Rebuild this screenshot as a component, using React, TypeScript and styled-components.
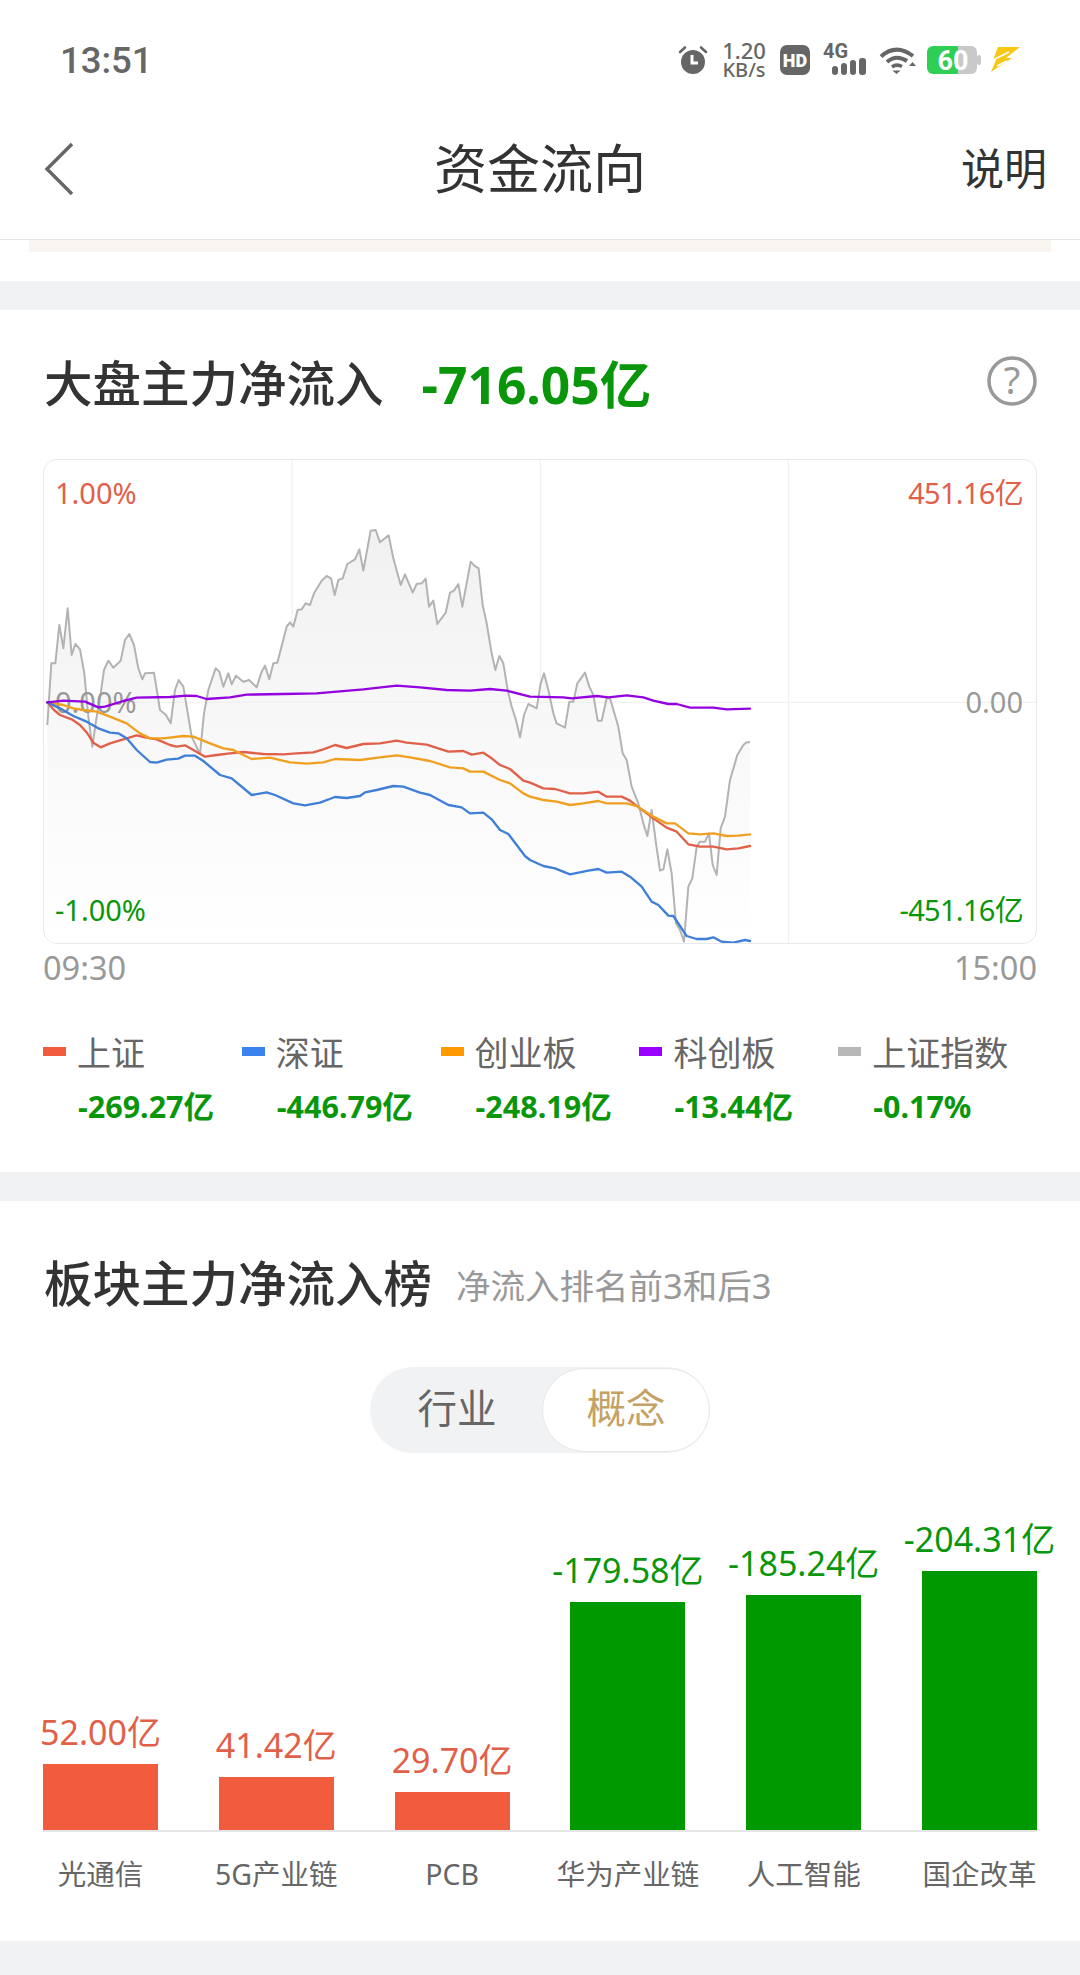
import React from 'react';
import styled, { createGlobalStyle } from 'styled-components';

const GlobalStyle = createGlobalStyle`
  html, body { margin: 0; padding: 0; background: #fff; }
  body { font-family: "Noto Sans", "Noto Sans CJK SC", sans-serif; }
  * { box-sizing: border-box; }
`;

const RED = '#e0604a';
const GREEN = '#0a960a';

const Page = styled.div`
  width: 1080px;
  height: 1975px;
  overflow: hidden;
  background: #fff;
  display: flex;
  flex-direction: column;
`;
const Header = styled.header`
  height: 240px;
  flex: none;
  border-bottom: 1px solid #e6e6e6;
`;
const StatusBar = styled.div`
  height: 120px;
  padding: 0 60px 0 60px;
  display: flex;
  align-items: center;
  justify-content: space-between;
`;
const Clock = styled.div`
  font-family: Roboto, sans-serif;
  font-size: 36.5px;
  font-weight: 500;
  color: #666;
`;
const StatusIcons = styled.div`
  display: flex;
  align-items: center;
`;
const StatusIcon = styled.svg<{ $ml: number }>`
  display: block;
  flex: none;
  overflow: visible;
  margin-left: ${(p) => p.$ml}px;
`;
const Speed = styled.div`
  width: 46px;
  margin-left: 13px;
  margin-right: -1px;
  display: flex;
  flex-direction: column;
  align-items: center;
  color: #666;
  font-weight: 500;
  line-height: 19px;
  font-size: 20px;
  white-space: nowrap;
`;
const SpeedValue = styled.span`
  font-size: 22px;
`;
const NavBar = styled.div`
  height: 100px;
  padding: 0 33px 2px;
  display: grid;
  grid-template-columns: 1fr auto 1fr;
  align-items: center;
`;
const BackIcon = styled.svg`
  display: block;
  margin-left: 11px;
`;
const NavTitle = styled.div`
  font-size: 53px;
  color: #333;
  line-height: 60px;
`;
const NavAction = styled.div`
  font-size: 43px;
  line-height: 50px;
  color: #333;
  text-align: right;
`;
const NoticeEdge = styled.div`
  height: 12px;
  margin: 0 29px;
  background: #f9f6f1;
  flex: none;
`;
const NoticeGap = styled.div`
  height: 29px;
  flex: none;
`;
const Divider = styled.div<{ $h: number }>`
  height: ${(p) => p.$h}px;
  background: #f1f2f4;
  flex: none;
`;
const Card = styled.section<{ $h: number }>`
  height: ${(p) => p.$h}px;
  padding: 0 43px;
  flex: none;
`;
const TitleRow = styled.div<{ $h: number; $lift: number }>`
  height: ${(p) => p.$h}px;
  padding-bottom: ${(p) => p.$lift}px;
  display: flex;
  align-items: center;
  padding-left: 1px;
`;
const Title = styled.h2`
  margin: 0;
  font-size: 48.5px;
  font-weight: 500;
  color: #333;
  white-space: nowrap;
`;
const TotalValue = styled.div`
  margin-left: 38px;
  font-size: 51.5px;
  font-weight: 700;
  color: #0a960a;
  white-space: nowrap;
`;
const HelpIcon = styled.svg`
  display: block;
  margin-left: auto;
  overflow: visible;
`;
const ChartBox = styled.div`
  position: relative;
  height: 485px;
  border: 1px solid #e9e9e9;
  border-radius: 14px;
  overflow: hidden;
`;
const ChartSvg = styled.svg`
  position: absolute;
  left: -1px;
  top: -1px;
  width: 994px;
  height: 485px;
`;
const AxisLabel = styled.div<{ $color: string; $side: 'left' | 'right'; $y: number; $tight?: boolean }>`
  position: absolute;
  ${(p) => p.$side}: ${(p) => (p.$side === 'left' ? 11 : 13)}px;
  top: ${(p) => p.$y - 22}px;
  font-size: 29px;
  line-height: 42px;
  letter-spacing: ${(p) => (p.$tight ? '-0.7px' : '0')};
  color: ${(p) => p.$color};
  white-space: nowrap;
`;
const TimeRow = styled.div`
  height: 50px;
  padding-bottom: 4px;
  display: flex;
  align-items: center;
  justify-content: space-between;
  font-size: 32.5px;
  color: #999;
`;
const Legend = styled.div`
  margin-top: 37px;
  display: grid;
  grid-template-columns: repeat(5, 1fr);
`;
const LegendItem = styled.div`
  display: flex;
  flex-direction: column;
  gap: 15px;
`;
const LegendName = styled.div`
  display: flex;
  align-items: center;
  gap: 11px;
  height: 40px;
  font-size: 34px;
  color: #666;
  white-space: nowrap;
`;
const Swatch = styled.span<{ $color: string }>`
  width: 23px;
  height: 9px;
  background: ${(p) => p.$color};
  flex: none;
`;
const LegendValue = styled.div`
  height: 40px;
  line-height: 40px;
  padding-left: 35px;
  font-size: 30.5px;
  font-weight: 700;
  color: #0a960a;
  white-space: nowrap;
`;
const SubTitle = styled.span`
  margin-left: 24px;
  margin-top: 6px;
  font-size: 34.5px;
  color: #999;
  white-space: nowrap;
`;
const Toggle = styled.div`
  margin: 4px auto 0;
  width: 340px;
  height: 86px;
  border-radius: 43px;
  background: #f1f2f4;
  display: flex;
  justify-content: flex-end;
  align-items: center;
`;
const ToggleOption = styled.div<{ $active?: boolean }>`
  flex: 1;
  height: ${(p) => (p.$active ? '84px' : '86px')};
  display: flex;
  align-items: center;
  justify-content: center;
  font-size: 39.5px;
  border-radius: 43px;
  color: ${(p) => (p.$active ? '#c4a265' : '#666')};
  background: ${(p) => (p.$active ? '#fff' : 'transparent')};
  border: ${(p) => (p.$active ? '1px solid #e8e8e8' : 'none')};
  padding-left: ${(p) => (p.$active ? '0' : '2px')};
  padding-bottom: 8px;
  ${(p) => (p.$active ? 'flex: none; width: 168px;' : '')}
`;
const BarPlot = styled.div`
  height: 379px;
  display: grid;
  grid-template-columns: repeat(6, 115px);
  justify-content: space-between;
  align-items: end;
  border-bottom: 2px solid #e6e6e6;
`;
const BarColumn = styled.div`
  display: flex;
  flex-direction: column;
  align-items: center;
  gap: 10px;
`;
const BarValue = styled.div<{ $color: string }>`
  font-size: 34px;
  line-height: 44px;
  color: ${(p) => p.$color};
  white-space: nowrap;
`;
const Bar = styled.div<{ $color: string; $h: number }>`
  width: 115px;
  height: ${(p) => p.$h}px;
  background: ${(p) => p.$color};
`;
const BarLabels = styled.div`
  margin-top: 22px;
  display: grid;
  grid-template-columns: repeat(6, 115px);
  justify-content: space-between;
`;
const BarLabel = styled.div`
  font-size: 28.5px;
  line-height: 40px;
  color: #666;
  text-align: center;
  white-space: nowrap;
  display: flex;
  justify-content: center;
`;

type P = [number, number];

const gray: P[] = [[52,825],[64,640],[76,640],[88,525],[100,595],[113,475],[125,615],[136,582],[150,598],[163,670],[175,800],[187,890],[200,800],[212,730],[222,660],[235,632],[250,653],[272,632],[285,570],[298,552],[312,585],[325,655],[337,688],[345,670],[372,668],[390,780],[408,795],[422,820],[435,720],[446,690],[460,710],[475,800],[485,860],[510,912],[522,790],[535,720],[557,655],[568,665],[580,710],[595,670],[605,703],[618,677],[640,695],[657,690],[680,712],[695,665],[705,647],[718,688],[730,640],[742,638],[770,530],[780,517],[790,530],[803,480],[815,478],[827,460],[840,465],[852,430],[875,392],[890,378],[903,385],[914,435],[925,390],[938,385],[952,342],[975,328],[988,298],[1000,362],[1022,242],[1037,240],[1050,277],[1076,256],[1090,325],[1112,405],[1125,373],[1148,428],[1160,402],[1175,400],[1187,386],[1197,470],[1210,452],[1222,522],[1247,488],[1260,428],[1272,422],[1285,402],[1297,470],[1322,335],[1333,347],[1346,355],[1358,465],[1370,520],[1385,610],[1396,660],[1408,618],[1420,640],[1433,720],[1445,770],[1458,810],[1470,862],[1482,795],[1495,762],[1520,775],[1532,700],[1542,670],[1555,720],[1570,790],[1580,820],[1605,833],[1618,755],[1630,755],[1642,700],[1665,668],[1678,710],[1690,735],[1703,812],[1715,812],[1730,745],[1740,745],[1765,830],[1778,910],[1790,930],[1805,1010],[1825,1060],[1840,1120],[1852,1158],[1865,1080],[1878,1180],[1890,1262],[1900,1258],[1912,1198],[1925,1270],[1938,1420],[1950,1440],[1962,1475],[1975,1310],[1987,1285],[2000,1190],[2010,1175],[2025,1175],[2037,1150],[2048,1245],[2060,1275],[2072,1135],[2085,1100],[2100,990],[2122,915],[2140,885],[2150,877],[2160,877]];

const red: P[] = [[52,757],[70,778],[90,795],[125,808],[150,825],[172,850],[190,878],[212,892],[240,880],[280,868],[320,856],[345,862],[380,868],[420,885],[440,890],[465,886],[490,900],[525,920],[560,915],[600,910],[640,906],[700,912],[760,913],[800,910],[850,907],[880,898],[915,885],[950,894],[1000,882],[1050,880],[1100,872],[1130,878],[1190,884],[1255,905],[1300,903],[1325,914],[1360,908],[1385,925],[1410,945],[1440,957],[1480,992],[1500,998],[1540,1015],[1575,1017],[1620,1030],[1660,1030],[1705,1025],[1730,1040],[1775,1040],[1800,1052],[1830,1075],[1870,1105],[1910,1133],[1940,1145],[1975,1183],[2010,1190],[2050,1190],[2090,1198],[2125,1195],[2160,1188]];

const orange: P[] = [[52,757],[100,765],[130,775],[160,780],[200,785],[240,800],[290,820],[330,850],[360,865],[400,865],[460,858],[490,860],[540,880],[580,895],[610,900],[640,915],[665,927],[720,923],[780,937],[830,941],[880,937],[915,927],[990,930],[1050,922],[1100,916],[1140,922],[1200,933],[1260,952],[1300,955],[1320,965],[1360,965],[1410,990],[1440,1000],[1480,1030],[1500,1040],[1540,1050],[1580,1055],[1620,1065],[1660,1060],[1705,1053],[1730,1060],[1790,1060],[1820,1068],[1870,1100],[1910,1120],[1935,1120],[1975,1150],[2010,1153],[2050,1150],[2090,1158],[2125,1157],[2160,1153]];

const blue: P[] = [[52,757],[90,775],[130,798],[170,815],[205,835],[240,848],[265,850],[290,865],[320,900],[360,936],[380,938],[410,929],[445,926],[465,917],[495,917],[520,933],[570,975],[605,985],[665,1035],[710,1027],[735,1035],[790,1060],[825,1066],[870,1058],[915,1041],[950,1044],[990,1038],[1005,1027],[1040,1020],[1090,1008],[1120,1010],[1170,1028],[1200,1035],[1255,1065],[1295,1072],[1320,1090],[1360,1088],[1385,1108],[1410,1140],[1435,1152],[1485,1218],[1500,1230],[1540,1248],[1575,1255],[1620,1273],[1675,1262],[1705,1257],[1730,1268],[1775,1265],[1800,1280],[1835,1310],[1865,1355],[1885,1365],[1915,1397],[1930,1398],[1970,1458],[2000,1467],[2030,1467],[2050,1462],[2075,1475],[2110,1478],[2145,1470],[2160,1473]];

const purple: P[] = [[52,757],[100,752],[165,755],[205,772],[225,770],[280,753],[320,743],[420,741],[470,737],[500,738],[530,747],[600,742],[650,734],[760,732],[860,730],[930,724],[1000,718],[1100,707],[1170,712],[1250,720],[1320,722],[1380,717],[1430,722],[1500,740],[1600,742],[1625,745],[1700,738],[1735,742],[1790,736],[1840,742],[1870,752],[1915,762],[1940,762],[1980,773],[2050,773],[2090,778],[2160,776]];

const pts = (a: P[]) => a.map((p) => p.join(',')).join(' ');

const series = [
  { name: '上证', value: '-269.27亿', color: '#f15b3e' },
  { name: '深证', value: '-446.79亿', color: '#3b82ee' },
  { name: '创业板', value: '-248.19亿', color: '#ff9900' },
  { name: '科创板', value: '-13.44亿', color: '#9900ff' },
  { name: '上证指数', value: '-0.17%', color: '#b8b8b8' },
];

const bars = [
  { name: '光通信', value: '52.00亿', h: 66, up: true },
  { name: '5G产业链', value: '41.42亿', h: 53, up: true },
  { name: 'PCB', value: '29.70亿', h: 38, up: true },
  { name: '华为产业链', value: '-179.58亿', h: 228, up: false },
  { name: '人工智能', value: '-185.24亿', h: 235, up: false },
  { name: '国企改革', value: '-204.31亿', h: 259, up: false },
];

function LineChart() {
  return (
    <ChartSvg viewBox="39 27 2982 1455" preserveAspectRatio="none">
      <defs>
        <linearGradient id="area" gradientUnits="userSpaceOnUse" x1="0" y1="240" x2="0" y2="1482">
          <stop offset="0" stopColor="#f1f1f1" />
          <stop offset="1" stopColor="#ffffff" />
        </linearGradient>
      </defs>
      {[786, 1531, 2275].map((x) => (
        <line key={x} x1={x} x2={x} y1="27" y2="1482" stroke="#eeeeee" strokeWidth="3" />
      ))}
      <polygon points={`52,1482 ${pts(gray)} 2160,1482`} fill="url(#area)" />
      <line x1="39" x2="3021" y1="757" y2="757" stroke="#eeeeee" strokeWidth="3" />
      <polyline points={pts(gray)} fill="none" stroke="#b3b3b3" strokeWidth="6" strokeLinejoin="round" />
    </ChartSvg>
  );
}

function ChartLines() {
  return (
    <ChartSvg viewBox="39 27 2982 1455" preserveAspectRatio="none">
      {[
        { a: red, c: '#e0604a' },
        { a: orange, c: '#f0a020' },
        { a: blue, c: '#3f7fd8' },
        { a: purple, c: '#9400e0' },
      ].map((s) => (
        <polyline key={s.c} points={pts(s.a)} fill="none" stroke={s.c} strokeWidth="7" strokeLinejoin="round" strokeLinecap="round" />
      ))}
    </ChartSvg>
  );
}

export default function App() {
  return (
    <Page>
      <GlobalStyle />
      <Header>
        <StatusBar>
          <Clock>13:51</Clock>
          <StatusIcons>
            <StatusIcon $ml={0} width="30" height="30" viewBox="0 0 30 30">
              <circle cx="15" cy="17" r="12" fill="#666" />
              <path d="M14 10v8h6" fill="none" stroke="#fff" strokeWidth="3" />
              <path d="M2 7l5-4.500M28 7l-5-4.500" stroke="#666" strokeWidth="2.6" strokeLinecap="round" />
            </StatusIcon>
            <Speed>
              <SpeedValue>1.20</SpeedValue>
              <span>KB/s</span>
            </Speed>
            <StatusIcon $ml={14} width="30" height="30" viewBox="0 0 30 30">
              <rect width="30" height="30" rx="7" fill="#666" />
              <text x="15" y="21.500" textAnchor="middle" fontFamily="Roboto, sans-serif" fontWeight="900" fontSize="18" fill="#fff">HD</text>
            </StatusIcon>
            <StatusIcon $ml={13} width="43" height="30" viewBox="0 0 43 30">
              <text x="0" y="12.500" fontFamily="Roboto, sans-serif" fontWeight="700" fontSize="20" fill="#666">4G</text>
              <rect x="9" y="21" width="6" height="9" rx="3" fill="#666" />
              <rect x="18" y="18" width="6" height="12" rx="3" fill="#666" />
              <rect x="27" y="15" width="6" height="15" rx="3" fill="#666" />
              <rect x="36" y="13" width="7" height="17" rx="3" fill="#666" />
            </StatusIcon>
            <StatusIcon $ml={13} width="37" height="28" viewBox="0 0 37 28">
              <path d="M2 10.500Q17 -3 34 10" fill="none" stroke="#666" strokeWidth="4" />
              <path d="M8 16Q17 8 28 15" fill="none" stroke="#666" strokeWidth="4" />
              <path d="M13 21Q17.500 17.500 23 20.500" fill="none" stroke="#666" strokeWidth="3.600" />
              <path d="M13.500 24.500h8L17.500 28z" fill="#666" />
              <path d="M30 20h7l-3.500-4z" fill="#666" />
            </StatusIcon>
            <StatusIcon $ml={11} width="54" height="28" viewBox="0 0 54 28">
              <rect x="20" y="0" width="30" height="28" rx="6" fill="#c9c9c9" />
              <path d="M6 0h25v28H6a6 6 0 0 1-6-6V6a6 6 0 0 1 6-6z" fill="#2fcf55" />
              <rect x="50" y="9" width="4" height="10" rx="2" fill="#c9c9c9" />
              <text x="26" y="24" textAnchor="middle" fontFamily="Roboto, sans-serif" fontWeight="700" fontSize="27" fill="#fff">60</text>
            </StatusIcon>
            <StatusIcon $ml={9} width="30" height="27" viewBox="0 0 30 27">
              <path d="M8 0h22L16 11h6L1 25l5-12H3z" fill="#f6c713" />
              <path d="M3 13L19 5M7 19L17 14" stroke="#fff" strokeWidth="1.800" />
            </StatusIcon>
          </StatusIcons>
        </StatusBar>
        <NavBar>
          <BackIcon width="30" height="54" viewBox="0 0 30 54">
            <path d="M28 2L3 27l25 25" fill="none" stroke="#666" strokeWidth="3.400" />
          </BackIcon>
          <NavTitle>资金流向</NavTitle>
          <NavAction>说明</NavAction>
        </NavBar>
      </Header>
      <NoticeEdge />
      <NoticeGap />
      <Divider $h={29} />
      <Card $h={862}>
        <TitleRow $h={149} $lift={7}>
          <Title>大盘主力净流入</Title>
          <TotalValue>-716.05亿</TotalValue>
          <HelpIcon width="50" height="50" viewBox="0 0 50 50">
            <circle cx="25" cy="25" r="23" fill="none" stroke="#999" strokeWidth="3.500" />
            <text x="25" y="38" textAnchor="middle" fontFamily="Noto Sans, sans-serif" fontSize="38" fill="#999">?</text>
          </HelpIcon>
        </TitleRow>
        <ChartBox>
          <LineChart />
          <AxisLabel $color="#999" $side="left" $y={243}>0.00%</AxisLabel>
          <ChartLines />
          <AxisLabel $color={RED} $side="left" $y={34}>1.00%</AxisLabel>
          <AxisLabel $color={GREEN} $side="left" $y={451}>-1.00%</AxisLabel>
          <AxisLabel $color={RED} $side="right" $y={34} $tight>451.16亿</AxisLabel>
          <AxisLabel $color="#999" $side="right" $y={243}>0.00</AxisLabel>
          <AxisLabel $color={GREEN} $side="right" $y={451} $tight>-451.16亿</AxisLabel>
        </ChartBox>
        <TimeRow>
          <span>09:30</span>
          <span>15:00</span>
        </TimeRow>
        <Legend>
          {series.map((s) => (
            <LegendItem key={s.name}>
              <LegendName>
                <Swatch $color={s.color} />
                {s.name}
              </LegendName>
              <LegendValue>{s.value}</LegendValue>
            </LegendItem>
          ))}
        </Legend>
      </Card>
      <Divider $h={29} />
      <Card $h={740}>
        <TitleRow $h={162} $lift={2}>
          <Title>板块主力净流入榜</Title>
          <SubTitle>净流入排名前3和后3</SubTitle>
        </TitleRow>
        <Toggle>
          <ToggleOption>行业</ToggleOption>
          <ToggleOption $active>概念</ToggleOption>
        </Toggle>
        <BarPlot>
          {bars.map((b) => (
            <BarColumn key={b.name}>
              <BarValue $color={b.up ? RED : GREEN}>{b.value}</BarValue>
              <Bar $color={b.up ? '#f15b3e' : '#009900'} $h={b.h} />
            </BarColumn>
          ))}
        </BarPlot>
        <BarLabels>
          {bars.map((b) => (
            <BarLabel key={b.name}>{b.name}</BarLabel>
          ))}
        </BarLabels>
      </Card>
      <Divider $h={34} />
    </Page>
  );
}
